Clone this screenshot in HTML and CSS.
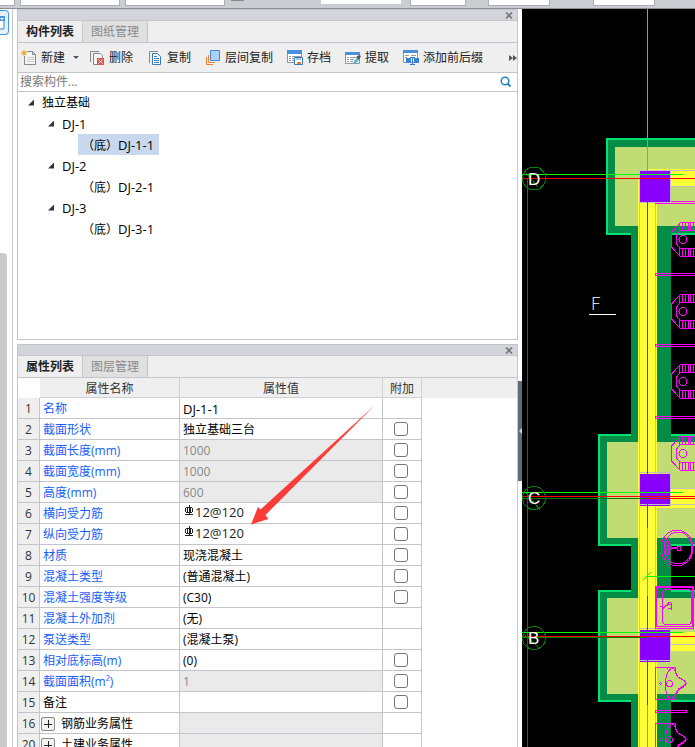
FILE: index.html
```
<!doctype html>
<html lang="zh-CN">
  <head>
    <meta charset="UTF-8">
    <meta name="viewport" content="width=device-width, initial-scale=1.0">

    <title>构件列表</title>

    <link rel="stylesheet" href="styles.css">
  </head>
  <body>

    <header class="top-bar">
      <input class="field field-first" type="text" aria-label="楼层">
      <input class="field field-wide" type="text" aria-label="构件类型">
      <input class="field field-wide" type="text" aria-label="构件名称">
      <span class="dash"></span>
      <input class="field field-flat" type="text" aria-label="偏移">
      <input class="field field-x" type="text" aria-label="X">
      <input class="field field-y" type="text" aria-label="Y">
      <input class="field field-angle" type="text" aria-label="角度">
    </header>

    <div class="workspace">
      <aside class="rail">
        <button class="rail-btn" type="button" aria-label="导航">
          <svg width="5" height="14" viewBox="0 0 5 14"><path d="M0 1h4v12H0" fill="#fff" stroke="#3b83d6"/><path d="M0 0h5v5H0z" fill="#4c95e0"/><path d="M0 2l2 2 2-2" fill="#fff"/></svg>
        </button>
        <div class="rail-scroll"></div>
      </aside>

      <main class="docks">
        <section class="panel panel-list">
          <div class="panel-title"><button class="close" type="button" aria-label="关闭"><svg width="8" height="7" viewBox="0 0 8 7"><path d="M1 .5l6 6M7 .5l-6 6" stroke="#777" stroke-width="1.6"/></svg></button></div>
          <div class="tabs">
            <button class="tab active" type="button">构件列表</button>
            <button class="tab" type="button">图纸管理</button>
          </div>
          <div class="toolbar">
            <button class="tool tool-new" type="button">
              <svg width="16" height="16" viewBox="0 0 16 16"><path d="M3.500 6v8.500h11V4.500l-3-3H6" fill="#f4f4f4" stroke="#7e8a94"/><path d="M11.500 1.500v3h3" fill="none" stroke="#7e8a94"/><path d="M6 7.500h7M6 9.500h7M6 11.500h7" stroke="#ccc"/><path d="M1 1l4 4M5 1L1 5M3 0v6M0 3h6" stroke="#f0a020"/></svg>
              新建
            </button>
            <button class="caret" type="button" aria-label="新建选项"><svg width="6" height="3" viewBox="0 0 6 3"><path d="M0 0h6L3 3z" fill="#555"/></svg></button>
            <button class="tool" type="button">
              <svg width="16" height="16" viewBox="0 0 16 16"><path d="M1.500 12V1.500H10" fill="none" stroke="#7e8a94"/><path d="M8 14.500H4.500v-11h7l2 2V8" fill="#f4f4f4" stroke="#7e8a94"/><path d="M8 8h7v7H8z" fill="#d9534f"/><path d="M9.500 9.500l4 4M13.500 9.500l-4 4" stroke="#fff"/></svg>
              删除
            </button>
            <button class="tool" type="button">
              <svg width="16" height="16" viewBox="0 0 16 16"><path d="M2.500 13V1.500H11" fill="none" stroke="#7e8a94"/><path d="M5.500 3.500h5l3 3v8h-8z" fill="#fff" stroke="#3579c8"/><path d="M7 6.500h3M7 8.500h5M7 10.500h5M7 12.500h5" stroke="#3579c8"/></svg>
              复制
            </button>
            <button class="tool" type="button">
              <svg width="16" height="16" viewBox="0 0 16 16"><path d="M1.500 7v7.500H8M3.500 5v7.500H10" fill="none" stroke="#ef8232"/><path d="M5.500.5h9v10h-9z" fill="#acd0fa" stroke="#4387d6"/></svg>
              层间复制
            </button>
            <button class="tool" type="button">
              <svg width="16" height="16" viewBox="0 0 16 16"><path d="M.5.5h14v12H.5z" fill="#fff" stroke="#8e98a2"/><path d="M0 0h15v4H0z" fill="#4b90dc"/><path d="M2 6.500h2M5 6.500h9M2 8.500h2M5 8.500h3M2 10.500h2M5 10.500h3" stroke="#999"/><path d="M7.500 7.500h8v7h-8z" fill="#fff" stroke="#3579c8"/><path d="M9 8h5v2H9z" fill="#9dc4f0"/><path d="M10 12h4v2h-4z" fill="#ef7a22"/></svg>
              存档
            </button>
            <button class="tool" type="button">
              <svg width="16" height="16" viewBox="0 0 16 16"><path d="M.5 2.500h14v11H.5z" fill="#fff" stroke="#8e98a2"/><path d="M0 2h15v3H0z" fill="#4b90dc"/><path d="M2 7.500h2M5 7.500h6M2 9.500h2M5 9.500h4M2 11.500h2M5 11.500h3" stroke="#999"/><path d="M8 14l1-3 3-3 2 2-3 3z" fill="#57b3d8"/><path d="M11 7l3 3 2-4-2-1z" fill="#555"/></svg>
              提取
            </button>
            <button class="tool" type="button">
              <svg width="16" height="16" viewBox="0 0 16 16"><path d="M.5.500h14v12H.5z" fill="#fff" stroke="#8e98a2"/><path d="M0 0h15v3H0z" fill="#4b90dc"/><path d="M2 5.500h4M8 5.500h5M2 7.500h2" stroke="#999"/><path d="M3 8h5v5H3zM11 8h5v5h-5z" fill="#3b83d6"/><path d="M7 7.500h5M7 14.500h5M9.500 7v8" stroke="#3579c8"/></svg>
              添加前后缀
            </button>
            <button class="more" type="button" aria-label="更多"><svg width="8" height="6" viewBox="0 0 8 6"><path d="M0 0l4 3-4 3zM4 0l4 3-4 3z" fill="#555"/></svg></button>
          </div>
          <div class="search">
            <input class="search-input" type="text" placeholder="搜索构件..." aria-label="搜索构件">
            <button class="search-btn" type="button" aria-label="搜索"><svg width="12" height="12" viewBox="0 0 12 12"><circle cx="5" cy="5" r="3.800" fill="none" stroke="#2684bd" stroke-width="1.500"/><path d="M7.500 7.500l3 3" stroke="#2684bd" stroke-width="2"/></svg></button>
          </div>
          <ul class="tree">
            <li><div class="node"><i class="arrow"></i><span>独立基础</span></div>
              <ul>
                <li><div class="node"><i class="arrow"></i><span class="latin">DJ-1</span></div>
                  <ul><li><div class="node leaf selected"><span class="mark">（底）</span><span class="latin">DJ-1-1</span></div></li></ul>
                </li>
                <li><div class="node"><i class="arrow"></i><span class="latin">DJ-2</span></div>
                  <ul><li><div class="node leaf"><span class="mark">（底）</span><span class="latin">DJ-2-1</span></div></li></ul>
                </li>
                <li><div class="node"><i class="arrow"></i><span class="latin">DJ-3</span></div>
                  <ul><li><div class="node leaf"><span class="mark">（底）</span><span class="latin">DJ-3-1</span></div></li></ul>
                </li>
              </ul>
            </li>
          </ul>
        </section>

        <section class="panel panel-props">
          <div class="panel-title"><button class="close" type="button" aria-label="关闭"><svg width="8" height="7" viewBox="0 0 8 7"><path d="M1 .5l6 6M7 .5l-6 6" stroke="#777" stroke-width="1.6"/></svg></button></div>
          <div class="tabs">
            <button class="tab active" type="button">属性列表</button>
            <button class="tab" type="button">图层管理</button>
          </div>
          <table class="props">
            <colgroup><col class="col-num"><col class="col-name"><col class="col-value"><col class="col-add"><col></colgroup>
            <thead>
              <tr><td class="corner"></td><th>属性名称</th><th>属性值</th><th>附加</th><td class="rest"></td></tr>
            </thead>
            <tbody>
              <tr><th>1</th><td class="name">名称</td><td class="latin">DJ-1-1</td><td></td></tr>
              <tr><th>2</th><td class="name">截面形状</td><td>独立基础三台</td><td><input type="checkbox" aria-label="附加 截面形状"></td></tr>
              <tr><th>3</th><td class="name">截面长度(mm)</td><td class="locked">1000</td><td><input type="checkbox" aria-label="附加 截面长度"></td></tr>
              <tr><th>4</th><td class="name">截面宽度(mm)</td><td class="locked">1000</td><td><input type="checkbox" aria-label="附加 截面宽度"></td></tr>
              <tr><th>5</th><td class="name">高度(mm)</td><td class="locked">600</td><td><input type="checkbox" aria-label="附加 高度"></td></tr>
              <tr><th>6</th><td class="name">横向受力筋</td><td class="rebar"><svg width="12" height="12" viewBox="0 0 12 12" shape-rendering="crispEdges"><path d="M3.500 2.500h5l1 1v3l-1 1h-5l-1-1v-3zM4.500 2v6M7.500 2v6M6.500 0v10M2 9.500h8" fill="none" stroke="#222"/></svg>12@120</td><td><input type="checkbox" aria-label="附加 横向受力筋"></td></tr>
              <tr><th>7</th><td class="name">纵向受力筋</td><td class="rebar"><svg width="12" height="12" viewBox="0 0 12 12" shape-rendering="crispEdges"><path d="M3.500 2.500h5l1 1v3l-1 1h-5l-1-1v-3zM4.500 2v6M7.500 2v6M6.500 0v10M2 9.500h8" fill="none" stroke="#222"/></svg>12@120</td><td><input type="checkbox" aria-label="附加 纵向受力筋"></td></tr>
              <tr><th>8</th><td class="name">材质</td><td>现浇混凝土</td><td><input type="checkbox" aria-label="附加 材质"></td></tr>
              <tr><th>9</th><td class="name">混凝土类型</td><td>(普通混凝土)</td><td><input type="checkbox" aria-label="附加 混凝土类型"></td></tr>
              <tr><th>10</th><td class="name">混凝土强度等级</td><td>(C30)</td><td><input type="checkbox" aria-label="附加 混凝土强度等级"></td></tr>
              <tr><th>11</th><td class="name">混凝土外加剂</td><td>(无)</td><td></td></tr>
              <tr><th>12</th><td class="name">泵送类型</td><td>(混凝土泵)</td><td></td></tr>
              <tr><th>13</th><td class="name">相对底标高(m)</td><td>(0)</td><td><input type="checkbox" aria-label="附加 相对底标高"></td></tr>
              <tr><th>14</th><td class="name">截面面积(m²)</td><td class="locked">1</td><td><input type="checkbox" aria-label="附加 截面面积"></td></tr>
              <tr><th>15</th><td>备注</td><td></td><td><input type="checkbox" aria-label="附加 备注"></td></tr>
              <tr><th>16</th><td><div class="group"><button class="plus" type="button" aria-label="展开"></button>钢筋业务属性</div></td><td class="locked"></td><td></td></tr>
              <tr><th>20</th><td><div class="group"><button class="plus" type="button" aria-label="展开"></button>土建业务属性</div></td><td class="locked"></td><td></td></tr>
            </tbody>
          </table>
          <svg class="pointer" width="124" height="120" viewBox="0 0 124 120"><path d="M0 119.500L7 102l2.500 2.500L123.500.500 14.500 110l3 4z" fill="#fc3c38"/></svg>
        </section>
      </main>

      <div class="splitter">
        <button class="collapse" type="button" aria-label="收起"><svg width="3" height="6" viewBox="0 0 3 6"><path d="M3 0v6L0 3z" fill="#ccd0d5"/></svg></button>
      </div>

      <div class="drawing">
        <svg class="plan" viewBox="522 9 173 738" preserveAspectRatio="xMinYMin slice" shape-rendering="crispEdges">
          <defs>
            <!-- urinal -->
            <g id="urinal" fill="none" stroke="#f0f">
              <path d="M700 .5H680.500L671.500 10v15l9 9.500H700M700 8.500H680.500L676.500 13v9l4 4.500H700"/>
              <path d="M679.500 1v8M682.500 1v8M685.500 1v8M688.500 1v8M690.500 1v8M693.500 1v8M679.500 26v8M682.500 26v8M685.500 26v8M688.500 26v8M690.500 26v8M693.500 26v8"/>
              <circle cx="683" cy="17.500" r="4"/>
            </g>
            <!-- washbasin, with its back against the wall -->
            <g id="basin" fill="none" stroke="#f0f">
              <path d="M667 .5H655.500v32H667M667 1.500l1-1h7.500v6l3 4 6 3.500 2 2.500-2 3-6 3.500-3 5v4.500h-6l-3-6-1-5v-9l2-7 4-5 3 2 3 7 7 4.500 1 2-1 2-6 4-4 7-3 3"/>
              <circle cx="669.500" cy="16.500" r="3"/>
              <path d="M660.500 15.500l1 1-1 1-1-1z"/>
            </g>
          </defs>

          <!-- beams and foundations -->
          <path d="M606 138h89v97h-89zM631 226h40v521h-40zM598 434h97v112h-97zM598 590h97v112h-97z" fill="#028c46"/>
          <path d="M695 139H607v95h24M671 234h24M631 435h-32v110h32M671 435h24M671 545h24M631 591h-32v110h32M671 591h24M671 701h24" fill="none" stroke="#00e272" stroke-width="2"/>
          <path d="M671 226h24v7h-24zM671 538h24v6h-24zM671 694h24v6h-24z" fill="#028c46"/>
          <path d="M615 147h80v79h-80zM607 442h88v96h-88zM607 598h88v96h-88z" fill="#c1dc72"/>
          <path d="M638 178h19v569h-19zM647 169h48v18h-48zM657 489h38v19h-38zM657 632h38v19h-38z" fill="#ffff38"/>
          <path d="M639.500 170v577M655.500 202v545M640 170.500h55M670 186.500h25M670 488.500h25M670 504.500h25M639 472.500h31M639 504.500h31M639 628.500h31M670 644.500h25" stroke="#c0c0c0" fill="none"/>

          <!-- columns -->
          <path d="M640 171h31v31h-31zM640 474h30v30h-30zM640 505h30v1h-30zM640 630h30v30h-30zM640 661h30v1h-30z" fill="#8a00ff"/>
          <path d="M670.500 170v32.500H639M670.500 472v32M670.500 628v32.500H639" stroke="#c0c0c0" fill="none"/>

          <!-- axes -->
          <path d="M527.500 179v568M522 498.500h125M522 637.500h125" stroke="#008000" fill="none"/>
          <path d="M647.500 9v162M647.500 528v68M647.500 705v42M522 174.500h161M522 492.500h161M647 576.500h48M643 580l8-8M522 632.500h161" stroke="#0f0" fill="none"/>
          <path d="M647.500 171v357M647.500 596v109M522 178.500h173M522 496.500h173M647 498.500h48M522 636.500h173" stroke="#f00" fill="none"/>
          <g fill="none" stroke="#008000">
            <circle cx="534" cy="178.500" r="11.500"/><path d="M526 173l12 14"/>
            <circle cx="534" cy="498" r="11.500"/><path d="M526 493l14 17"/>
            <circle cx="534" cy="638" r="11.500"/><path d="M524 634l15 14"/>
          </g>
          <g class="axis-label">
            <text x="528" y="185">D</text>
            <text x="528" y="504">C</text>
            <text x="528" y="644">B</text>
            <text class="thin" x="591" y="310">F</text>
          </g>
          <path d="M589 314.500h27" stroke="#fff"/>

          <!-- partitions and fixtures -->
          <g fill="none" stroke="#f0f">
            <path d="M671 201.500h24M655 203.500h40M695 273.500h-39.500v2H695M695 344.500h-39.500v2H695M695 416.500h-39.500v2H695M655.500 710.500h31v2h-31z"/>
            <ellipse cx="677" cy="548" rx="16" ry="18"/>
            <ellipse cx="678" cy="548" rx="14" ry="16"/>
            <path d="M665.500 541.500h3v4l3 2h5M665.500 554.500h3v-4l3-2h5M665.500 542v12M667 545l2 3-2 3"/>
            <circle cx="679" cy="548.500" r="2"/>
            <path d="M655.500 586.500h38v42h-38zM656.500 587.500h36v39h-36z"/>
            <path d="M662.500 591.500l2-2h25l2 2V622l-2 2.500h-25l-2-2z"/>
            <path d="M659.500 606.500h3v3l3-4 6-1M667 605l2-3 2 1v6l-3-1M662 608l4-2"/>
          </g>
          <use href="#urinal" y="222"/>
          <use href="#urinal" y="294"/>
          <use href="#urinal" y="364"/>
          <use href="#urinal" y="436"/>
          <use href="#basin" y="667"/>
          <use href="#basin" y="723"/>
        </svg>
      </div>
    </div>

  </body>
</html>
```
FILE: styles.css
```
* {
  box-sizing: border-box;
}

body {
  margin: 0;
  height: 100vh;
  display: flex;
  flex-direction: column;
  overflow: hidden;
  background: #fff;
  color: #000;
  font-family: "Open Sans", "Noto Sans CJK SC", sans-serif;
  font-size: 12px;
  line-height: 20px;
}

button,
input {
  margin: 0;
  padding: 0;
  border: 0;
  background: none;
  color: inherit;
  font: inherit;
}

button {
  cursor: pointer;
}

svg {
  display: block;
  flex: none;
}

/* top bar */
.top-bar {
  display: flex;
  align-items: flex-start;
  flex: none;
  height: 9px;
  background: #cacdd2;
  border-bottom: 1px solid #8b9198;
}

.field {
  flex: none;
  height: 6px;
  margin-right: 5px;
  background: #fff;
  border: 1px solid #acaeb2;
  border-top: 0;
}

.field-first {
  width: 15px;
  border-left: 0;
}

.field-wide {
  width: 100px;
}

.dash {
  width: 13px;
  height: 1px;
  margin: 0 77px 0 1px;
  background: #888;
}

.field-flat {
  width: 80px;
  height: 4px;
  margin-right: 9px;
  border: 0;
}

.field-x {
  width: 56px;
  margin-right: 22px;
}

.field-y {
  width: 62px;
  margin-right: 43px;
}

.field-angle {
  width: 62px;
}

/* layout */
.workspace {
  display: flex;
  flex: 1;
  min-height: 0;
}

.rail {
  display: flex;
  flex-direction: column;
  flex: none;
  width: 13px;
  margin-right: 4px;
  border-right: 1px solid #c3c5ca;
}

.rail-btn {
  width: 9px;
  height: 25px;
  margin: 1px 0 2px;
  background: #e4f1fd;
  border: 1px solid #3f97e8;
  border-left: 0;
  border-radius: 0 4px 4px 0;
}

.rail-scroll {
  flex: none;
  width: 7px;
  height: 67%;
  margin-top: auto;
  background: #cacaca;
  border-radius: 0 4px 0 0;
}

.docks {
  display: flex;
  flex-direction: column;
  flex: 0 1 501px;
  min-width: 0;
  gap: 4px;
}

.panel {
  border: 1px solid #c3c5ca;
}

.panel-list {
  flex: 0 0 331px;
}

.panel-props {
  position: relative;
  flex: 1;
  min-height: 0;
  overflow: hidden;
  border-bottom: 0;
}

.panel-title {
  display: flex;
  justify-content: flex-end;
  height: 11px;
  padding-right: 4px;
  background: #d4d5da;
  border-bottom: 1px solid #c3c5ca;
}

.close {
  width: 8px;
  height: 10px;
}

.tabs {
  display: flex;
  height: 22px;
  background: #efefef;
  border-bottom: 1px solid #c3c5ca;
}

.tab {
  width: 65px;
  background: #e0e0e0;
  border-right: 1px solid #c3c5ca;
  color: #8a8a8a;
}

.tab.active {
  background: #efefef;
  color: #222;
  font-weight: bold;
}

/* toolbar */
.toolbar {
  display: flex;
  align-items: center;
  height: 30px;
  padding-left: 3px;
  background: #efefef;
  border-bottom: 1px solid #c3c5ca;
}

.tool {
  display: flex;
  align-items: center;
  flex: none;
  gap: 4px;
  margin-right: 14px;
  color: #222;
}

.tool-new {
  margin-right: 0;
}

.caret {
  width: 22px;
  margin-right: 2px;
  padding: 0 8px;
}

.more {
  margin-left: auto;
}

.search {
  display: flex;
  align-items: center;
  height: 19px;
  padding: 0 5px 0 2px;
  border-bottom: 1px solid #c3c5ca;
}

.search-input {
  flex: 1;
  min-width: 0;
  height: 18px;
  outline: 0;
}

.search-input::placeholder {
  color: #777;
}

/* tree */
.tree,
.tree ul {
  margin: 0;
  padding: 0;
  list-style: none;
}

.tree {
  padding-left: 10px;
}

.tree ul {
  padding-left: 20px;
}

.node {
  display: flex;
  align-items: center;
  width: max-content;
  height: 21px;
}

.arrow {
  width: 6px;
  height: 6px;
  margin-right: 8px;
  background: #333;
  clip-path: polygon(100% 0, 100% 100%, 0 100%);
}

.leaf {
  margin-left: 10px;
  padding: 0 5px 0 4px;
}

/* the TC face centres its full-width brackets */
.mark {
  font-family: "Noto Sans CJK TC", sans-serif;
}

.selected {
  background: #c8d9ef;
}

.latin {
  font-size: 13px;
}

/* property table */
.props {
  width: 100%;
  table-layout: fixed;
  border-collapse: separate;
  border-spacing: 0;
}

.col-num {
  width: 22px;
}

.col-name {
  width: 140px;
}

.col-value {
  width: 203px;
}

.col-add {
  width: 39px;
}

.props th,
.props td {
  height: 21px;
  padding: 2px 3px 0;
  border-right: 1px solid #c3c5ca;
  border-bottom: 1px solid #c3c5ca;
  line-height: 18px;
  font-weight: normal;
  text-align: left;
  white-space: nowrap;
}

.props thead th,
.props thead td {
  height: 20px;
  line-height: 17px;
  background: #efefef;
  border-color: #d0d1d4;
  text-align: center;
  color: #333;
}

.props thead .corner {
  background: #fff;
  border: 0;
}

.props thead .rest {
  border: 0;
}

.props tbody th {
  padding: 2px 0 0;
  background: #efefef;
  text-align: center;
  color: #333;
}

.props .name {
  color: #1660fa;
}

.props .locked {
  background: #eaeaea;
  color: #8a8a8a;
}

.props .rebar {
  padding: 0 3px 2px;
  font-size: 13px;
  color: #222;
}

.rebar svg {
  display: inline-block;
}

.props input {
  display: block;
  width: 14px;
  height: 14px;
  margin: 0 0 2px 8px;
  appearance: none;
  background: #fff;
  border: 1px solid #777;
  border-radius: 3px;
}

.group {
  display: flex;
  align-items: center;
  gap: 6px;
  margin-left: -2px;
}

.plus {
  width: 14px;
  height: 14px;
  border: 1px solid #888;
  border-radius: 2px;
  background:
    linear-gradient(#222, #222) center / 8px 1px no-repeat,
    linear-gradient(#222, #222) center / 1px 8px no-repeat,
    #f2f2f2;
}

/* the arrow lies over the table */
.pointer {
  position: absolute;
  top: 60px;
  left: 233px;
  pointer-events: none;
}

.splitter {
  flex: none;
  width: 4px;
}

.collapse {
  display: flex;
  align-items: center;
  justify-content: flex-end;
  width: 4px;
  height: 100px;
  margin-top: 372px;
  background: #5f6b78;
}

/* drawing area */
.drawing {
  flex: 1;
  min-width: 0;
  background: #000;
}

.plan {
  width: 100%;
  height: 100%;
}

.axis-label {
  fill: #fff;
  font-family: "Liberation Sans", sans-serif;
  font-size: 17px;
}

.axis-label .thin {
  font-family: Lato, sans-serif;
  font-weight: 300;
}
```
